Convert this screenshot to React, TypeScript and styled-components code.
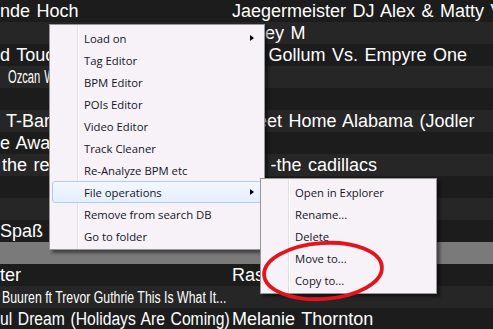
import * as React from 'react';
import styled, { createGlobalStyle, css } from 'styled-components';

const GlobalStyle = createGlobalStyle`
  html, body {
    margin: 0;
    padding: 0;
    background: #1d1d1d;
    overflow: hidden;
  }
`;

type Track = {
  title: string;
  artist: string;
  small?: boolean;
  squeeze?: number;
  indent?: number;
  selected?: boolean;
};

const tracks: Track[] = [
  { title: 'nde Hoch', artist: 'Jaegermeister DJ Alex & Matty Valentino' },
  { title: '', artist: 'Honey M' },
  { title: 'd Touch of Love', artist: 'Ivor Gollum Vs. Empyre One' },
  { title: 'Ozcan Wow Wow', artist: '', squeeze: 0.62, indent: 8 },
  { title: '', artist: '' },
  { title: 'T-Bar Groove', artist: 'Sweet Home Alabama (Jodler', indent: 6 },
  { title: 'e Away', artist: '' },
  { title: 'the rest of it', artist: 'Sue -the cadillacs', indent: 2 },
  { title: '', artist: '' },
  { title: '', artist: '' },
  { title: 'Spaß (Remix)', artist: '' },
  { title: '', artist: '', selected: true },
  { title: 'ter', artist: 'Rasmus Faber' },
  { title: 'Buuren ft Trevor Guthrie This Is What It...', artist: '', small: true, squeeze: 0.77, indent: 2 },
  { title: 'ul Dream (Holidays Are Coming)', artist: 'Melanie Thornton', squeeze: 0.87 },
];

const TrackList = styled.div`
  display: flex;
  flex-direction: column;
  width: 493px;
  height: 329px;
  overflow: hidden;
`;

const TrackRow = styled.div<{ $odd: boolean; $selected?: boolean }>`
  display: grid;
  grid-template-columns: 231px 1fr;
  height: 22px;
  flex-shrink: 0;
  align-items: center;
  background: ${(p) => (p.$selected ? '#7a7a7a' : p.$odd ? '#262626' : '#1c1c1c')};
  color: #fff;
  font-family: 'Liberation Sans', Arial, sans-serif;
  font-size: 18px;
  word-spacing: 1.5px;
  white-space: nowrap;
`;

const Cell = styled.div<{ $indent?: number }>`
  overflow: hidden;
  padding-left: ${(p) => p.$indent ?? 0}px;
  line-height: 22px;
`;

const ArtistCell = styled(Cell)`
  padding-left: 1px;
`;

const CellText = styled.span<{ $small?: boolean; $squeeze?: number }>`
  display: inline-block;
  transform-origin: left center;
  transform: scaleX(${(p) => p.$squeeze ?? 1});
  ${(p) =>
    p.$small &&
    css`
      font-size: 16px;
      word-spacing: 0;
    `}
`;

const Menu = styled.div<{ $left: number; $top: number; $width: number }>`
  position: absolute;
  left: ${(p) => p.$left}px;
  top: ${(p) => p.$top}px;
  width: ${(p) => p.$width}px;
  box-sizing: border-box;
  padding: 2px;
  border: 1px solid #979797;
  background-color: #f6f2f7;
  background-image: linear-gradient(
    to right,
    transparent 27px,
    #e2dfe3 27px,
    #e2dfe3 28px,
    #ffffff 28px,
    #ffffff 29px,
    transparent 29px
  );
  box-shadow: 3px 3px 3px rgba(0, 0, 0, 0.45);
  display: flex;
  flex-direction: column;
  font-family: 'Segoe UI', 'Open Sans', sans-serif;
  font-size: 11.3px;
  color: #14142a;
`;

const MenuItem = styled.div<{ $active?: boolean }>`
  position: relative;
  height: 22px;
  box-sizing: border-box;
  display: flex;
  align-items: center;
  padding-left: 31px;
  border: 1px solid transparent;
  border-radius: 3px;
  ${(p) =>
    p.$active &&
    css`
      border-color: #aecbf0;
      background: linear-gradient(to bottom, #f3f8fe, #e4eefb);
    `}
`;

const Arrow = styled.span`
  position: absolute;
  right: 7px;
  top: 7px;
  width: 0;
  height: 0;
  border-style: solid;
  border-width: 3.5px 0 3.5px 4px;
  border-color: transparent transparent transparent #000;
`;

const Circle = styled.svg`
  position: absolute;
  left: 256px;
  top: 236px;
  pointer-events: none;
`;

const mainItems = [
  'Load on',
  'Tag Editor',
  'BPM Editor',
  'POIs Editor',
  'Video Editor',
  'Track Cleaner',
  'Re-Analyze BPM etc',
  'File operations',
  'Remove from search DB',
  'Go to folder',
];

const fileItems = ['Open in Explorer', 'Rename...', 'Delete', 'Move to...', 'Copy to...'];

export default function App() {
  return (
    <>
      <GlobalStyle />
      <TrackList>
        {tracks.map((t, i) => (
          <TrackRow key={i} $odd={i % 2 === 1} $selected={t.selected}>
            <Cell $indent={t.indent}>
              <CellText $small={t.small} $squeeze={t.squeeze}>
                {t.title}
              </CellText>
            </Cell>
            <ArtistCell>
              <CellText>{t.artist}</CellText>
            </ArtistCell>
          </TrackRow>
        ))}
      </TrackList>

      <Menu $left={49} $top={24} $width={216}>
        {mainItems.map((label) => (
          <MenuItem key={label} $active={label === 'File operations'}>
            {label}
            {(label === 'Load on' || label === 'File operations') && <Arrow />}
          </MenuItem>
        ))}
      </Menu>

      <Menu $left={260} $top={178} $width={177}>
        {fileItems.map((label) => (
          <MenuItem key={label}>{label}</MenuItem>
        ))}
      </Menu>

      <Circle width="136" height="72" viewBox="0 0 136 72">
        <ellipse
          cx="67"
          cy="35"
          rx="59"
          ry="28"
          fill="none"
          stroke="#e3141b"
          strokeWidth="3.8"
          transform="rotate(-4 67 35)"
        />
      </Circle>
    </>
  );
}
